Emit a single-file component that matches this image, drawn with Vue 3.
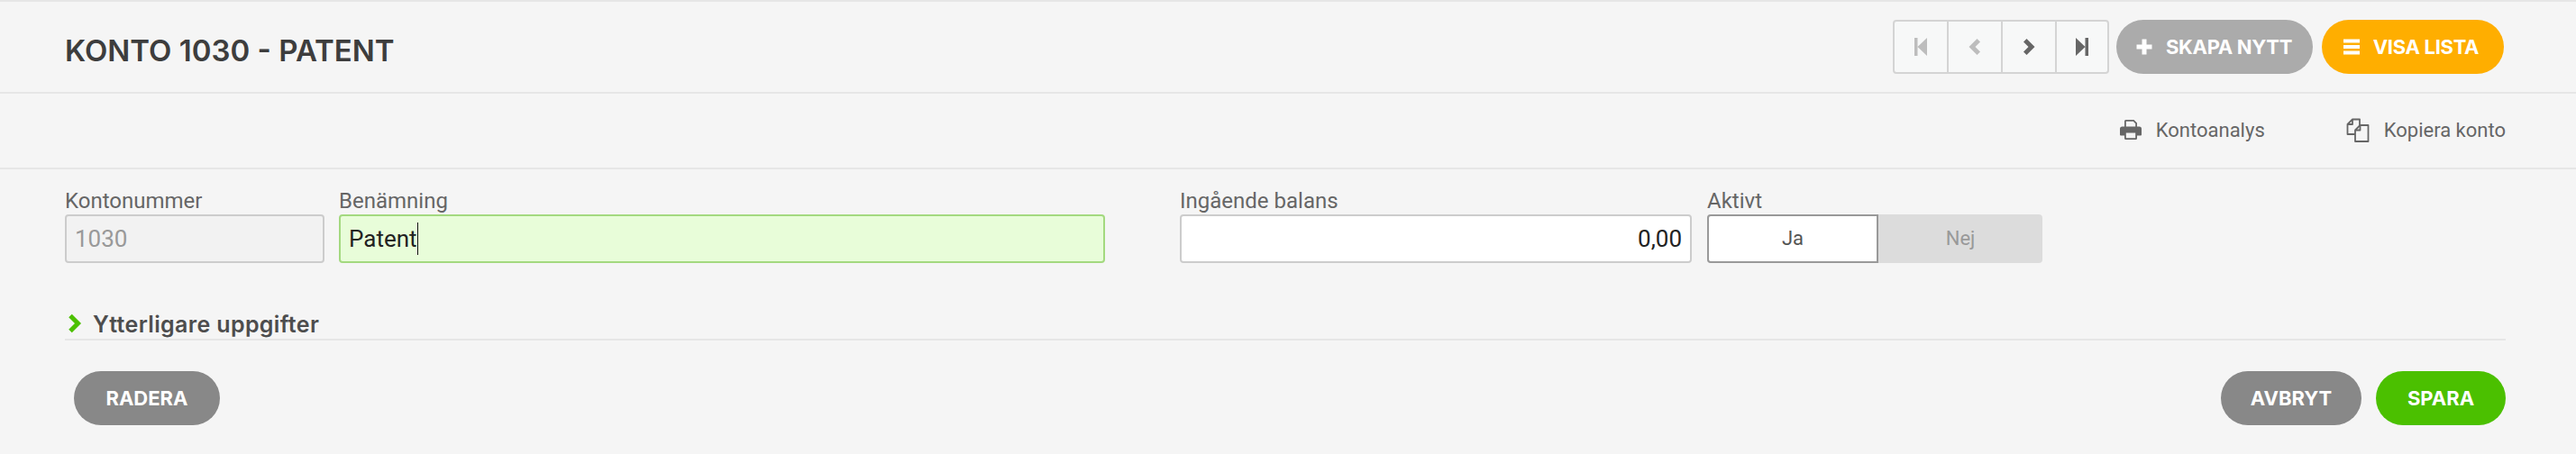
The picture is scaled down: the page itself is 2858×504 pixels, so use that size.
<template>
  <div class="page">
    <header class="topbar">
      <h1 class="title">KONTO 1030 - PATENT</h1>
      <div class="top-actions">
        <div class="pager">
          <button class="pager-btn" v-for="p in pagerIcons" :key="p.name" :aria-label="p.name">
            <svg width="14" height="20" viewBox="0 0 14 20" :fill="p.on ? '#666' : '#bdbdbd'">
              <path :d="p.d" />
            </svg>
          </button>
        </div>
        <button class="pill pill-create">
          <svg width="20" height="20" viewBox="0 0 20 20" fill="#fff"><path d="M7.500 1.500h5v6h6v5h-6v6h-5v-6h-6v-5h6z" /></svg>
          SKAPA NYTT
        </button>
        <button class="pill pill-list">
          <svg width="20" height="20" viewBox="0 0 20 20" fill="#fff"><path d="M1 1.500h18v4H1zM1 8h18v4H1zM1 14.500h18v4H1z" /></svg>
          VISA LISTA
        </button>
      </div>
    </header>

    <nav class="subbar">
      <a class="sub-link print-link">
        <svg width="24" height="23" viewBox="0 0 24 23" fill="#666">
          <path d="M5 9V2.500A1.500 1.500 0 0 1 6.500 1h9l3.500 3.500V9h-1.800V5.300L14.800 2.800H6.800V9z" />
          <path d="M2.500 8.500h19A2.500 2.500 0 0 1 24 11v6.500a1 1 0 0 1-1 1h-4v3a1.500 1.500 0 0 1-1.500 1.500h-11A1.500 1.500 0 0 1 5 21.500v-3H1a1 1 0 0 1-1-1V11a2.500 2.500 0 0 1 2.500-2.500zM6.800 15.500v5.700h10.400v-5.700z" />
        </svg>
        Kontoanalys
      </a>
      <a class="sub-link">
        <svg width="26" height="27" viewBox="0 0 26 27" fill="none" stroke="#666" stroke-width="1.800" stroke-linejoin="round">
          <path d="M10 18H1.500V7L7 1.500h8V8" />
          <path d="M7 1.500V7H1.500" />
          <path d="M10 13.500L15.500 8H24.500V26H10z" />
          <path d="M15.500 8v5.500H10" />
        </svg>
        Kopiera konto
      </a>
    </nav>

    <section class="fields">
      <div class="field f-number">
        <label>Kontonummer</label>
        <div class="box box-disabled">1030</div>
      </div>
      <div class="field f-name">
        <label>Benämning</label>
        <div class="box box-focus"><span class="caret">Patent</span></div>
      </div>
      <div class="field f-balance">
        <label>Ingående balans</label>
        <div class="box box-right">0,00</div>
      </div>
      <div class="field f-active">
        <label>Aktivt</label>
        <div class="toggle">
          <div class="toggle-on">Ja</div>
          <div class="toggle-off">Nej</div>
        </div>
      </div>
    </section>

    <div class="more">
      <svg width="16" height="22" viewBox="0 0 16 22" fill="none" stroke="#4cc000" stroke-width="5" stroke-linejoin="miter">
        <path d="M3 2.500L11.500 11L3 19.500" />
      </svg>
      <span>Ytterligare uppgifter</span>
    </div>

    <footer class="footer">
      <button class="pill pill-grey radera">RADERA</button>
      <div class="footer-right">
        <button class="pill pill-grey avbryt">AVBRYT</button>
        <button class="pill pill-save">SPARA</button>
      </div>
    </footer>
  </div>
</template>

<script setup>
const pagerIcons = [
  { name: 'first', on: false, d: 'M0 0h3.500v20H0zM14 0v20L3.500 10z' },
  { name: 'previous', on: false, d: 'M9.500 1L13 4.500 7.500 10 13 15.500 9.500 19 .5 10z' },
  { name: 'next', on: true, d: 'M4.500 1L1 4.500 6.500 10 1 15.500 4.500 19 13.500 10z' },
  { name: 'last', on: true, d: 'M0 0v20L10.500 10zM10.500 0H14v20h-3.500z' },
]
</script>

<style>
html, body {
  background: #f5f5f5;
}
</style>

<style scoped>
.page {
  width: 2858px;
  height: 504px;
  background: #f5f5f5;
  box-sizing: border-box;
  font-family: Roboto, "Liberation Sans", sans-serif;
  color: #666;
  overflow: hidden;
}

button {
  font-family: inherit;
  border: none;
  cursor: pointer;
  padding: 0;
}

.topbar {
  height: 104px;
  box-sizing: border-box;
  border-top: 2px solid #e6e6e6;
  border-bottom: 2px solid #e6e6e6;
  padding: 20px 80px 0 72px;
  display: flex;
  justify-content: space-between;
}

.title {
  margin: 4px 0 0;
  font-family: Inter, sans-serif;
  font-size: 33px;
  font-weight: 600;
  line-height: 60px;
  color: #3d3d3d;
}

.top-actions {
  display: flex;
  align-items: flex-start;
}

.pager {
  display: flex;
  height: 60px;
  box-sizing: border-box;
  border: 2px solid #d4d4d4;
  border-radius: 4px;
  background: #f7f8f8;
  margin-right: 8px;
}

.pager-btn {
  width: 60px;
  background: transparent;
  border-right: 2px solid #d4d4d4;
  display: flex;
  align-items: center;
  justify-content: center;
}

.pager-btn:last-child {
  border-right: none;
  width: 56px;
}

.pill {
  height: 60px;
  border-radius: 30px;
  color: #fff;
  font-family: Inter, sans-serif;
  font-size: 22px;
  font-weight: 700;
  display: flex;
  align-items: center;
  justify-content: center;
  gap: 14px;
}

.pill-create {
  width: 218px;
  background: #ababab;
  letter-spacing: -.3px;
  padding-right: 2px;
}

.pill-list {
  width: 202px;
  background: #ffae00;
  margin-left: 10px;
  letter-spacing: -.3px;
  padding-right: 5px;
}

.subbar {
  height: 84px;
  box-sizing: border-box;
  border-bottom: 2px solid #e6e6e6;
  padding: 23px 78px 0 0;
  display: flex;
  justify-content: flex-end;
  gap: 90px;
}

.sub-link {
  display: flex;
  align-items: center;
  height: 34px;
  font-size: 22px;
  color: #666;
  gap: 16px;
}

.print-link svg {
  margin-top: -2px;
}

.fields {
  display: flex;
  padding: 20px 0 0 72px;
  height: 104px;
  box-sizing: border-box;
}

.field label {
  display: block;
  font-size: 24px;
  line-height: 30px;
  color: #666;
}

.f-number { width: 288px; margin-right: 16px; }
.f-name { width: 850px; margin-right: 83px; }
.f-balance { width: 568px; margin-right: 17px; }
.f-active { width: 372px; }

.box {
  height: 54px;
  box-sizing: border-box;
  border: 2px solid #ccc;
  border-radius: 4px;
  background: #fff;
  padding: 0 9px;
  font-size: 26px;
  line-height: 50px;
  color: #222;
}

.box-disabled {
  background: #f2f2f2;
  color: #999;
}

.box-focus {
  background: #e8fdd9;
  border-color: #a3d97f;
}

.box-right {
  text-align: right;
}

.caret {
  display: inline-block;
  border-right: 1px solid #111;
  line-height: 36px;
}

.toggle {
  display: flex;
  height: 54px;
  background: #dcdcdc;
  border-radius: 4px;
  font-size: 22px;
}

.toggle-on {
  width: 190px;
  box-sizing: border-box;
  background: #fff;
  border: 2px solid #999;
  border-radius: 4px 0 0 4px;
  text-align: center;
  line-height: 50px;
  color: #555;
}

.toggle-off {
  flex: 1;
  text-align: center;
  line-height: 54px;
  color: #999;
}

.more {
  margin: 48px 78px 0 72px;
  height: 38px;
  box-sizing: border-box;
  border-bottom: 2px solid #e6e6e6;
  display: flex;
  align-items: flex-start;
  gap: 12px;
  padding-left: 3px;
  padding-top: 5px;
  font-family: Inter, sans-serif;
  font-size: 25px;
  font-weight: 600;
  letter-spacing: .35px;
  line-height: 30px;
  color: #4d4d4d;
}

.more svg {
  margin-top: 3px;
}

.footer {
  display: flex;
  justify-content: space-between;
  padding: 34px 78px 0 82px;
}

.footer-right {
  display: flex;
  gap: 16px;
}

.pill-grey {
  background: #888;
}

.radera { width: 162px; }
.avbryt { width: 156px; }

.pill-save {
  width: 144px;
  background: #4bc000;
}
</style>
